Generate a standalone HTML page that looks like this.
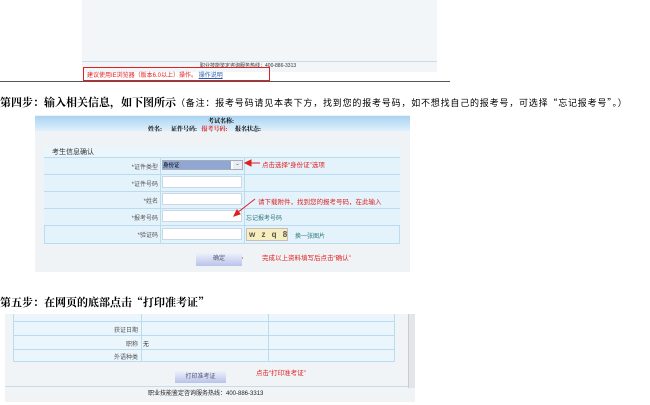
<!DOCTYPE html>
<html><head><meta charset="utf-8"><style>
*{margin:0;padding:0;box-sizing:border-box}
body{width:650px;height:405px;background:#fff;position:relative;overflow:hidden;font-family:"Liberation Sans","Noto Sans CJK SC",sans-serif;font-size:6px;color:#333}
.a{position:absolute}
.cj{font-family:"Liberation Serif","Noto Serif CJK SC",serif}
.red{color:#e02020}
.row{position:absolute;left:44px;width:356px;height:17px;border-bottom:1px solid #b9dcf0;background:#e4f2fb}
.lbl{position:absolute;left:44px;width:117px;text-align:right;padding-right:3px;font-size:6px;color:#555}
.inp{position:absolute;left:162px;width:80px;height:12px;border:1px solid #c8d8e4;background:#fff}
</style></head><body>
<div class="a" style="left:82px;top:0;width:355px;height:72px;background:#f3f6f9"></div>
<div class="a" style="left:82px;top:61px;width:355px;height:1px;background:#c9dbe8"></div>
<div class="a" style="left:200px;top:62px;font-size:5px;color:#333">职业技能鉴定咨询服务热线：400-886-3313</div>
<div class="a" style="left:83px;top:67px;width:187px;height:14px;border:1px solid #e02020"></div>
<div class="a red" style="left:87px;top:70px;font-size:6px;white-space:nowrap">建议使用IE浏览器（版本6.0以上）操作。 <span style="color:#2a5db0;text-decoration:underline">操作说明</span></div>
<div class="a" style="left:0;top:81px;width:450px;height:1px;background:#555"></div>
<div class="a" style="left:0;top:94px;color:#000;white-space:nowrap;font-family:'Noto Serif CJK SC',serif"><b style="font-size:11px">第四步：输入相关信息，如下图所示</b><span style="font-size:9px;letter-spacing:0.8px;font-family:'Noto Sans CJK SC',sans-serif">（备注：报考号码请见本表下方，找到您的报考号码，如不想找自己的报考号，可选择“忘记报考号”。）</span></div>
<div class="a" style="left:35px;top:115px;width:375px;height:157px;background:#f0f3f6"></div>
<div class="a" style="left:35px;top:116px;width:375px;height:15px;background:linear-gradient(#a9d3f2,#e0f0fb)"></div>
<div class="a cj" style="left:208px;top:116px;font-size:6px;font-weight:bold;color:#000">考试名称:</div>
<div class="a cj" style="left:148px;top:124px;font-size:6px;font-weight:bold;color:#000;white-space:nowrap">姓名: &nbsp;&nbsp;&nbsp;&nbsp;&nbsp;证件号码: &nbsp;&nbsp;<span class="red">报考号码:</span> &nbsp;&nbsp;&nbsp;&nbsp;报名状态:</div>
<div class="a" style="left:44px;top:146px;width:356px;height:98px;border:1px solid #b9dcf0;background:#e4f2fb"></div>
<div class="a" style="left:44px;top:146px;width:356px;height:12px;border-bottom:1px solid #b9dcf0;background:#eaf5fc"></div>
<div class="a" style="left:52px;top:147px;font-size:7px;color:#333">考生信息确认</div>
<div class="row" style="top:158px"></div><div class="row" style="top:175px"></div><div class="row" style="top:192px"></div><div class="row" style="top:209px"></div>
<div class="a" style="left:160px;top:158px;width:1px;height:86px;background:#b9dcf0"></div>
<div class="a" style="left:244px;top:158px;width:1px;height:86px;background:#b9dcf0"></div>
<div class="lbl" style="top:162px">*证件类型</div>
<div class="lbl" style="top:179px">*证件号码</div>
<div class="lbl" style="top:196px">*姓名</div>
<div class="lbl" style="top:213px">*报考号码</div>
<div class="lbl" style="top:230px">*验证码</div>
<div class="a" style="left:162px;top:160px;width:81px;height:10px;border:1px solid #aab;background:#fff"><div style="width:68px;height:8px;background:#8fa7d3;font-size:5.5px;color:#000">身份证</div><div class="a" style="left:70px;top:0;width:9px;height:8px;background:#e8eef4;font-size:5px;text-align:center">⌄</div></div>
<div class="inp" style="top:176px"></div><div class="inp" style="top:193px"></div><div class="inp" style="top:210px"></div><div class="inp" style="top:228px"></div>
<div class="a" style="left:246px;top:213px;font-size:6px;color:#2a7a7a">忘记报考号码</div>
<div class="a" style="left:246px;top:228px;width:42px;height:13px;background:#f6eec0;border:1px solid #cbb;font-size:8px;line-height:11px;font-weight:bold;color:#554;letter-spacing:2px;padding-left:2px;white-space:nowrap;overflow:hidden">w z q 8</div>
<div class="a" style="left:295px;top:231px;font-size:6px;color:#2a7a7a">换一张图片</div>
<div class="a red" style="left:262px;top:159px;font-size:6.5px">点击选择“身份证”选项</div>
<div class="a red" style="left:258px;top:196px;font-size:6.5px">请下载附件，找到您的报考号码，在此输入</div>
<div class="a red" style="left:262px;top:252px;font-size:6.5px">完成以上资料填写后点击“确认”</div>
<svg class="a" style="left:0;top:0" width="650" height="405"><g stroke="#e02020" stroke-width="1" fill="#e02020">
<line x1="250" y1="163" x2="260" y2="163"/><polygon points="245,163 251,160 251,166"/>
<line x1="255" y1="199" x2="237" y2="213"/><polygon points="234,216 237,210 240,214"/>
<line x1="230" y1="258" x2="243" y2="258"/><polygon points="226,258 232,255 232,261"/>
<line x1="228" y1="376" x2="246" y2="376"/><polygon points="223,376 229,373 229,379"/></g></svg>
<div class="a" style="left:196px;top:253px;width:46px;height:13px;background:linear-gradient(#eef0fb,#b9c3ea);font-size:6px;text-align:center;line-height:13px;color:#557">确定</div>
<div class="a" style="left:0;top:294px;font-size:11px;font-weight:bold;color:#000;font-family:'Noto Serif CJK SC',serif;white-space:nowrap">第五步：在网页的底部点击“打印准考证”</div>
<div class="a" style="left:5px;top:314px;width:410px;height:88px;background:#f1f4f7"></div>
<div class="a" style="left:13px;top:314px;width:382px;height:48px;background:#eaf5fc;border:1px solid #b9dcf0;border-top:none"></div>
<div class="a" style="left:13px;top:321px;width:382px;height:1px;background:#b9dcf0"></div>
<div class="a" style="left:13px;top:335px;width:382px;height:1px;background:#b9dcf0"></div>
<div class="a" style="left:13px;top:349px;width:382px;height:1px;background:#b9dcf0"></div>
<div class="a" style="left:141px;top:314px;width:1px;height:48px;background:#b9dcf0"></div>
<div class="a" style="left:268px;top:314px;width:1px;height:48px;background:#b9dcf0"></div>
<div class="lbl" style="left:13px;width:128px;top:325px">获证日期</div>
<div class="lbl" style="left:13px;width:128px;top:339px">职称</div>
<div class="a" style="left:143px;top:339px;font-size:6px">无</div>
<div class="lbl" style="left:13px;width:128px;top:352px">外语种类</div>
<div class="a" style="left:408px;top:314px;width:7px;height:74px;background:#e2e6ea;border-left:1px solid #ccc"></div>
<div class="a" style="left:175px;top:371px;width:51px;height:12px;background:linear-gradient(#eef0fb,#b9c3ea);font-size:6px;text-align:center;line-height:12px;color:#557">打印准考证</div>
<div class="a red" style="left:256px;top:367px;font-size:6.5px">点击“打印准考证”</div>
<div class="a" style="left:5px;top:386px;width:403px;height:1px;background:#c9dbe8"></div>
<div class="a" style="left:148px;top:388px;font-size:6px;color:#222">职业技能鉴定咨询服务热线：400-886-3313</div>
</body></html>
